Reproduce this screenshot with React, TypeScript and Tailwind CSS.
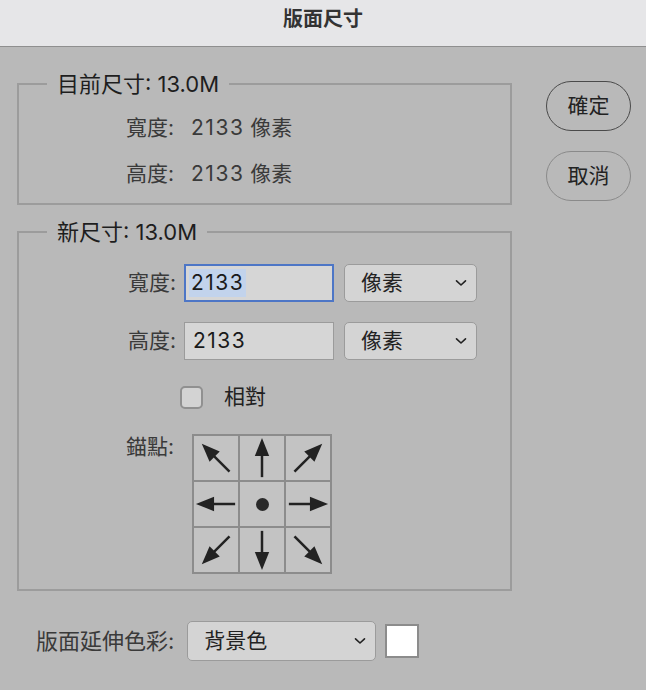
import { ReactNode } from "react";

const font = "font-['Inter','Noto_Sans_CJK_TC',sans-serif]";

function Chevron() {
  return (
    <svg width="12" height="8" viewBox="0 0 12 8" className="shrink-0">
      <path d="M1.5 1.8 L6 6 L10.5 1.8" fill="none" stroke="#222" strokeWidth="1.6" strokeLinecap="round" strokeLinejoin="round" />
    </svg>
  );
}

function Select({ value, className }: { value: string; className: string }) {
  return (
    <div
      className={`flex items-center justify-between rounded-[5px] border border-[#9b9b9b] bg-[#d4d4d4] pl-[16px] pr-[9px] text-[21px] text-[#222] ${className}`}
    >
      <span>{value}</span>
      <Chevron />
    </div>
  );
}

// angle: 0 = up, 45 = up-right ... rotates around the cell centre
function Arrow({ angle }: { angle: number }) {
  return (
    <svg width="44" height="44" viewBox="0 0 46 46">
      <g transform={`rotate(${angle} 23 23)`}>
        <line x1="23" y1="43" x2="23" y2="16" stroke="#222" strokeWidth="2.6" />
        <polygon points="23,2 15.5,21 30.5,21" fill="#222" />
      </g>
    </svg>
  );
}

function Cell({ children }: { children: ReactNode }) {
  return <div className="flex h-[44px] w-[44px] items-center justify-center bg-[#c3c3c3]">{children}</div>;
}

function Group({ legend, children, className }: { legend: string; children: ReactNode; className?: string }) {
  return (
    <fieldset className={`w-[495px] border-2 border-[#9c9c9c] ${className ?? ""}`}>
      <legend className="ml-[28px] px-[10px] text-[22px] leading-[26px] text-[#1e1e1e]">{legend}</legend>
      {children}
    </fieldset>
  );
}

export default function App() {
  return (
    <div className={`flex h-[690px] w-[646px] flex-col bg-[#b9b9b9] ${font}`}>
      <div className="flex h-[47px] shrink-0 justify-center border-b border-[#8f8f8f] bg-[#e6e6e8] pt-[5px]">
        <span className="text-[20px] font-bold leading-[28px] text-[#333]">版面尺寸</span>
      </div>

      <div className="flex pl-[17px] pt-[24px]">
        <div className="flex flex-col">
          <Group legend="目前尺寸: 13.0M">
            <div className="flex flex-col gap-[20px] pb-[16px] pl-[107px] pt-[18px] text-[21px] leading-[26px] text-[#3a3a3a]">
              <div>
                寬度:<span className="ml-[17px] tracking-[1.5px]">2133</span> 像素
              </div>
              <div>
                高度:<span className="ml-[17px] tracking-[1.5px]">2133</span> 像素
              </div>
            </div>
          </Group>

          <Group legend="新尺寸: 13.0M" className="mt-[14px]">
            <div className="flex flex-col pb-[15px] pl-[107px] pt-[19px] text-[21px] text-[#3a3a3a]">
              <div className="flex items-center">
                <span className="w-[50px] text-right">寬度:</span>
                <div className="ml-[8px] flex h-[38px] w-[150px] items-center border-2 border-[#4d76c6] bg-[#d6d6d6] pl-[3px]">
                  <span className="bg-[#c2d3ec] px-[2px] leading-[28px] tracking-[1.5px] text-[#1a1a1a]">2133</span>
                </div>
                <Select value="像素" className="ml-[10px] h-[38px] w-[133px]" />
              </div>
              <div className="mt-[20px] flex items-center">
                <span className="w-[50px] text-right">高度:</span>
                <div className="ml-[8px] flex h-[38px] w-[150px] items-center border border-[#9b9b9b] bg-[#d6d6d6] pl-[8px]">
                  <span className="leading-[26px] tracking-[1.5px] text-[#1a1a1a]">2133</span>
                </div>
                <Select value="像素" className="ml-[10px] h-[38px] w-[133px]" />
              </div>
              <div className="mt-[24px] flex items-center pl-[54px]">
                <div className="h-[23px] w-[23px] rounded-[5px] border-2 border-[#909090] bg-[#d3d3d3]" />
                <span className="ml-[21px] leading-[26px] text-[#222]">相對</span>
              </div>
              <div className="mt-[24px] flex items-start">
                <span className="w-[50px] leading-[26px]">錨點:</span>
                <div className="ml-[16px] grid grid-cols-3 gap-[2px] bg-[#8c8c8c] p-[2px]">
                  <Cell><Arrow angle={-45} /></Cell>
                  <Cell><Arrow angle={0} /></Cell>
                  <Cell><Arrow angle={45} /></Cell>
                  <Cell><Arrow angle={-90} /></Cell>
                  <Cell><div className="h-[13px] w-[13px] rounded-full bg-[#2a2a2a]" /></Cell>
                  <Cell><Arrow angle={90} /></Cell>
                  <Cell><Arrow angle={-135} /></Cell>
                  <Cell><Arrow angle={180} /></Cell>
                  <Cell><Arrow angle={135} /></Cell>
                </div>
              </div>
            </div>
          </Group>

          <div className="mt-[30px] flex items-center pl-[19px]">
            <span className="text-[22px] text-[#3a3a3a]">版面延伸色彩:</span>
            <Select value="背景色" className="ml-[13px] h-[40px] w-[189px]" />
            <div className="ml-[9px] h-[34px] w-[34px] border-2 border-[#8c8c8c] bg-white" />
          </div>
        </div>

        <div className="ml-[34px] mt-[10px] flex flex-col gap-[20px]">
          <button className="h-[50px] w-[85px] rounded-full border-[1.5px] border-[#4a4a4a] text-[21px] text-[#222]">確定</button>
          <button className="h-[50px] w-[85px] rounded-full border-[1.5px] border-[#8a8a8a] text-[21px] text-[#222]">取消</button>
        </div>
      </div>
    </div>
  );
}
